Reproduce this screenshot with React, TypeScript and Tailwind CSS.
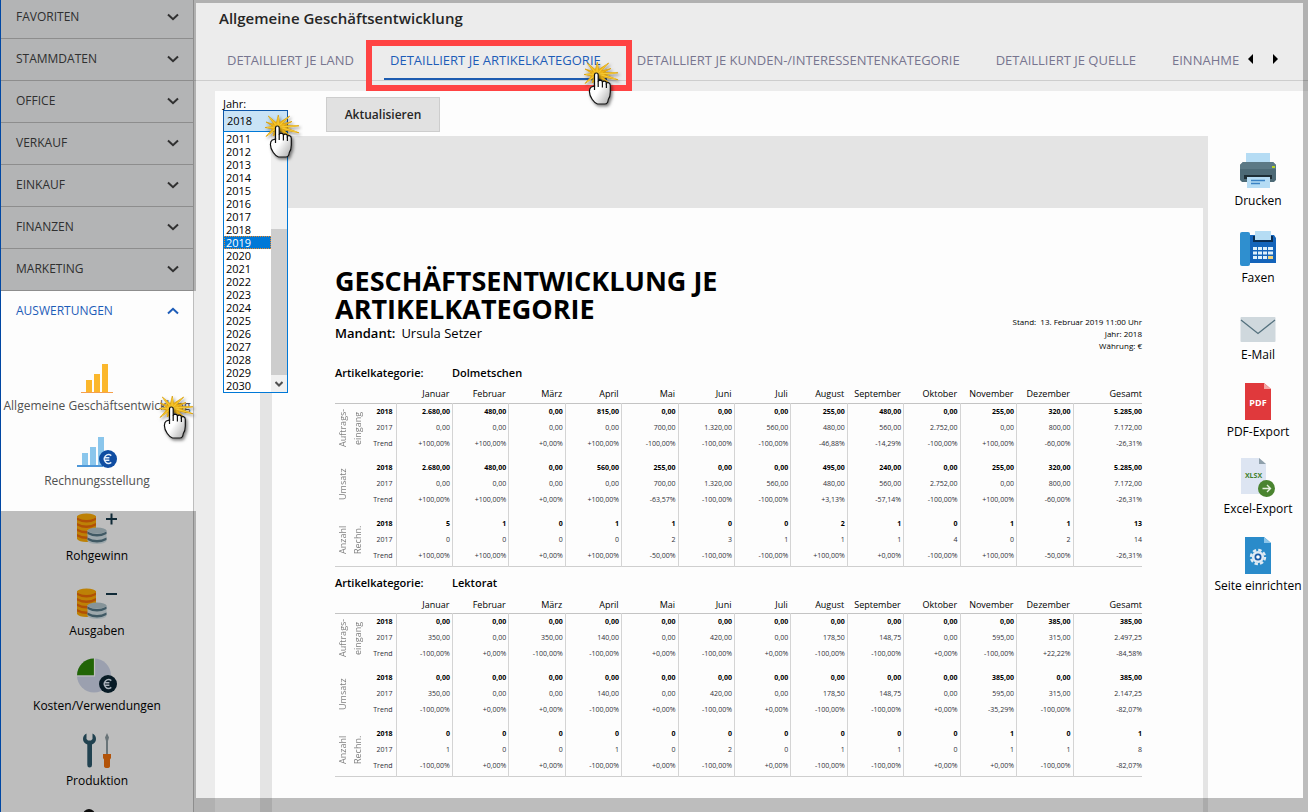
import React, { useState } from 'react';

const MONTHS = ['Januar', 'Februar', 'März', 'April', 'Mai', 'Juni', 'Juli', 'August', 'September', 'Oktober', 'November', 'Dezember', 'Gesamt'];

const ROW_LABELS = ['2018', '2017', 'Trend'];

interface Group {
  label: string[];
  rows: string[];
}

interface Category {
  name: string;
  groups: Group[];
}

const CATEGORIES: Category[] = [
  {
    name: 'Dolmetschen',
    groups: [
      {
        label: ['Auftrags-', 'eingang'],
        rows: [
          '2.680,00 480,00 0,00 815,00 0,00 0,00 0,00 255,00 480,00 0,00 255,00 320,00 5.285,00',
          '0,00 0,00 0,00 0,00 700,00 1.320,00 560,00 480,00 560,00 2.752,00 0,00 800,00 7.172,00',
          '+100,00% +100,00% +0,00% +100,00% -100,00% -100,00% -100,00% -46,88% -14,29% -100,00% +100,00% -60,00% -26,31%',
        ],
      },
      {
        label: ['Umsatz'],
        rows: [
          '2.680,00 480,00 0,00 560,00 255,00 0,00 0,00 495,00 240,00 0,00 255,00 320,00 5.285,00',
          '0,00 0,00 0,00 0,00 700,00 1.320,00 560,00 480,00 560,00 2.752,00 0,00 800,00 7.172,00',
          '+100,00% +100,00% +0,00% +100,00% -63,57% -100,00% -100,00% +3,13% -57,14% -100,00% +100,00% -60,00% -26,31%',
        ],
      },
      {
        label: ['Anzahl', 'Rechn.'],
        rows: [
          '5 1 0 1 1 0 0 2 1 0 1 1 13',
          '0 0 0 0 2 3 1 1 1 4 0 2 14',
          '+100,00% +100,00% +0,00% +100,00% -50,00% -100,00% -100,00% +100,00% +0,00% -100,00% +100,00% -50,00% -26,31%',
        ],
      },
    ],
  },
  {
    name: 'Lektorat',
    groups: [
      {
        label: ['Auftrags-', 'eingang'],
        rows: [
          '0,00 0,00 0,00 0,00 0,00 0,00 0,00 0,00 0,00 0,00 0,00 385,00 385,00',
          '350,00 0,00 350,00 140,00 0,00 420,00 0,00 178,50 148,75 0,00 595,00 315,00 2.497,25',
          '-100,00% +0,00% -100,00% -100,00% +0,00% -100,00% +0,00% -100,00% -100,00% +0,00% -100,00% +22,22% -84,58%',
        ],
      },
      {
        label: ['Umsatz'],
        rows: [
          '0,00 0,00 0,00 0,00 0,00 0,00 0,00 0,00 0,00 0,00 385,00 0,00 385,00',
          '350,00 0,00 0,00 140,00 0,00 420,00 0,00 178,50 148,75 0,00 595,00 315,00 2.147,25',
          '-100,00% +0,00% +0,00% -100,00% +0,00% -100,00% +0,00% -100,00% -100,00% +0,00% -35,29% -100,00% -82,07%',
        ],
      },
      {
        label: ['Anzahl', 'Rechn.'],
        rows: [
          '0 0 0 0 0 0 0 0 0 0 1 0 1',
          '1 0 0 1 0 2 0 1 1 0 1 1 8',
          '-100,00% +0,00% +0,00% -100,00% +0,00% -100,00% +0,00% -100,00% -100,00% +0,00% +0,00% -100,00% -82,07%',
        ],
      },
    ],
  },
];

const YEARS = Array.from({ length: 20 }, (_, i) => String(2011 + i));

const Chevron: React.FC<{ up?: boolean }> = ({ up }) => (
  <svg width="12" height="8" viewBox="0 0 12 8" fill="none" stroke="currentColor" strokeWidth="2">
    <path d={up ? 'M1 6.5 L6 1.8 L11 6.5' : 'M1 1.5 L6 6.2 L11 1.5'} />
  </svg>
);

// Hand pointer with a click burst, fingertip at 14,12
const ClickHand: React.FC<{ className: string }> = ({ className }) => (
  <svg width="40" height="50" viewBox="0 0 40 50" className={`pointer-events-none absolute z-30 ${className}`}>
    <defs>
      <linearGradient id="hand" x1="0" y1="0" x2="1" y2="1">
        <stop offset="0.5" stopColor="#fff" />
        <stop offset="1" stopColor="#a8a8a8" />
      </linearGradient>
      <filter id="shade" x="-30%" y="-30%" width="170%" height="170%">
        <feDropShadow dx="1.5" dy="2" stdDeviation="1.6" floodOpacity="0.5" />
      </filter>
    </defs>
    <path
      d="M15.3 1 L16.6 8.5 L26.7 2 L19.5 9.8 L29 7.5 L21.5 11.4 L36 11.8 L22.5 13.6 L36 18.8 L20.5 15.8 L27 22 L17 17 L10 22 L11.5 16.5 L3 22.5 L9.5 15 L2 13.5 L10 12.4 L3 8 L11 10.3 L5.3 2 L13.4 8.8 Z"
      fill="#efb61a"
      stroke="#d99c06"
      strokeWidth="0.7"
      filter="url(#shade)"
    />
    <path d="M15 13 L15.3 3 M15 13 L25 3.5 M15 13 L34 12 M15 13 L34 18 M15 13 L4 13.4 M15 13 L6.5 3.6 M15 13 L5 21" stroke="#f9d23c" strokeWidth="0.8" />
    <path
      d="M12.5 14 Q12.5 12 14.3 12 Q16.2 12 16.2 14 V20.6 Q16.6 19.2 18.4 19.2 Q20.4 19.4 20.4 21.2 Q21 20 22.6 20.2 Q24.4 20.5 24.4 22.2 Q25 21.3 26.4 21.6 Q28.3 22.2 28.3 24.5 V31 Q28.3 36 26.3 38.5 Q25.8 43 23 43 H15.5 Q12.6 42 10.3 38.5 Q7.4 34.5 7.4 30.5 Q7.4 27.2 9.3 26 L12.5 25 Z"
      fill="url(#hand)"
      stroke="#111"
      strokeWidth="1.2"
      filter="url(#shade)"
    />
    <path d="M12.5 24 V29 M16.2 20 V26 M20.4 21 V26.5 M24.4 22 V27" stroke="#111" strokeWidth="1.2" fill="none" />
  </svg>
);

const EuroBadge: React.FC<{ fill: string }> = ({ fill }) => (
  <g>
    <circle cx="31" cy="26" r="9" fill={fill} />
    <path d="M34.3 22.6 A4.3 4.3 0 1 0 34.3 29.4 M27 24.8 H32.4 M27 27.2 H32.4" fill="none" stroke="#e3eefa" strokeWidth="1.4" />
  </g>
);

const BarsIcon = () => (
  <svg width="40" height="36" viewBox="0 0 40 36">
    <path d="M9 22 h6 v12 h-6z M17 16 h6 v18 h-6z M25 6 h6 v28 h-6z" fill="#fbb72c" />
    <path d="M4 34 H36 V35 H4z" fill="#f5a04c" />
  </svg>
);

const BarsEuroIcon = () => (
  <svg width="40" height="36" viewBox="0 0 40 36">
    <path d="M5 20 h6 v12 h-6z M13 14 h6 v18 h-6z M21 4 h6 v28 h-6z" fill="#8ac6ec" />
    <path d="M0 32 H26 V34 H0z" fill="#4e97d8" />
    <EuroBadge fill="#0f4da2" />
  </svg>
);

const Coins: React.FC<{ sign: string }> = ({ sign }) => (
  <svg width="40" height="36" viewBox="0 0 40 36">
    <path d="M0 8 V31 Q2 34 9.5 34 Q17 34 19 31 V8z" fill="#fdac08" />
    <path
      d="M0 9.5 Q9.5 14.500 19 9.5 V12 Q9.5 17 0 12z M0 15 Q9.5 20 19 15 V17.500 Q9.5 22.500 0 17.500z M0 20.500 Q9.5 25.500 19 20.500 V23 Q9.5 28 0 23z M0 26 Q9.5 31 19 26 V28.500 Q9.5 33.500 0 28.500z"
      fill="#ec6b09"
    />
    <ellipse cx="9.5" cy="8.5" rx="9.5" ry="3" fill="#fdac08" />
    <path d="M10.5 22 V33 Q12 36 20 36 Q28 36 29.5 33 V22z" fill="#d3e1e6" />
    <path d="M10.5 23.5 Q20 28.5 29.5 23.5 V26 Q20 31 10.5 26z M10.5 29.5 Q20 34.5 29.5 29.5 V32 Q20 37 10.5 32z" fill="#567786" />
    <ellipse cx="20" cy="22.5" rx="9.5" ry="3" fill="#b3c6cd" />
    <path d={sign} stroke="#16384a" strokeWidth="2" />
  </svg>
);

const PieIcon = () => (
  <svg width="40" height="36" viewBox="0 0 40 36">
    <circle cx="17" cy="17.5" r="17" fill="#cfd6ea" />
    <path d="M17 17.5 H0 A17 17 0 0 1 17 0.5z" fill="#2c8708" />
    <path d="M17.5 0 V18 H0" fill="none" stroke="#fff" strokeWidth="1.2" />
    <EuroBadge fill="#0b2533" />
  </svg>
);

const ToolsIcon = () => (
  <svg width="40" height="36" viewBox="0 0 40 36">
    <path d="M9.500 0.5 Q6 2 6 6 Q6 9.5 10.300 11.5 V32 Q10.300 34.5 12.600 34.5 Q15 34.5 15 32 V11.5 Q19 9.5 19 6 Q19 2 15.500 0.5 V6 L14 7.5 H11 L9.500 6z" fill="#2c596b" />
    <path d="M30 0 L32 4.5 L31 8 V21 H29 V8 L28 4.5z" fill="#8d9ba1" />
    <path d="M26 21 H34 V25 L33 26.5 V33 Q33 35 30 35 Q27 35 27 33 V26.5 L26 25z" fill="#ee6f0d" />
  </svg>
);

const PersonIcon = () => (
  <svg width="40" height="36" viewBox="0 0 40 36">
    <circle cx="12" cy="7" r="6" fill="#111" />
    <path d="M2 36 Q2 16 12 16 Q22 16 22 36z" fill="#111" />
  </svg>
);

const PrinterIcon = () => (
  <svg width="36" height="40" viewBox="0 0 36 40">
    <path d="M6 3 H30 V13 H6z" fill="#b5dcf4" />
    <path d="M0 15 L3 12 H33 L36 15 V30 L34 32 H2 L0 30z" fill="#4d6a76" />
    <path d="M0 15 L3 12 H33 L36 15 V19 H0z" fill="#5c7985" />
    <path d="M4 25 H32 V29 H4z" fill="#1e2e35" />
    <rect x="32" y="16" width="3" height="2" fill="#b6d422" />
    <path d="M7 27 H30 V38 H7z" fill="#b5dcf4" />
    <path d="M11 30.5 H25 M11 33.5 H20" stroke="#3a82c4" strokeWidth="1.5" />
  </svg>
);

const FaxIcon = () => (
  <svg width="36" height="40" viewBox="0 0 36 40">
    <path d="M10 8 H34 L36 11 V36 H10z" fill="#1464ba" />
    <rect y="5" width="10" height="34" rx="2" fill="#2f8fcf" />
    <path d="M13 9 H33 V15 H13z" fill="#0b2d52" />
    <path d="M15 4 H31 V13 H15z" fill="#b5dcf4" />
    <path
      d="M13 20 h4 v3 h-4z M18 20 h4 v3 h-4z M23 20 h4 v3 h-4z M28 20 h5 v3 h-5z M13 24.5 h4 v3 h-4z M18 24.5 h4 v3 h-4z M23 24.5 h4 v3 h-4z M28 24.5 h5 v3 h-5z M13 29 h4 v3 h-4z M18 29 h4 v3 h-4z M23 29 h4 v3 h-4z"
      fill="#dff0fb"
    />
    <path d="M28 29 h5 v3 h-5z" fill="#f3d37a" />
  </svg>
);

const MailIcon = () => (
  <svg width="36" height="40" viewBox="0 0 36 40">
    <rect x="0.5" y="13" width="35" height="25" rx="1" fill="#cfd8dd" />
    <path d="M1 16 L18 29.5 L35 16" fill="none" stroke="#54717e" strokeWidth="1.3" />
  </svg>
);

const PdfIcon = () => (
  <svg width="36" height="40" viewBox="0 0 36 40">
    <path d="M5 2 H24 L31 8 V39 H5z" fill="#e0393c" />
    <path d="M24 2 V8 H31z" fill="#f4a6a4" />
    <text x="18" y="25" textAnchor="middle" fontSize="9" fontWeight="700" fill="#fff">PDF</text>
  </svg>
);

const XlsxIcon = () => (
  <svg width="36" height="40" viewBox="0 0 36 40">
    <path d="M1 0 H19 L26 6 V36 H1z" fill="#dde5f2" />
    <path d="M19 0 V6 H26z" fill="#8fa0ab" />
    <text x="13.5" y="20" textAnchor="middle" fontSize="7" fontWeight="700" fill="#41802c">XLSX</text>
    <circle cx="26.5" cy="30.5" r="8.5" fill="#4a8430" />
    <path d="M22.5 30.5 H30 M27 27 L30.5 30.5 L27 34" fill="none" stroke="#e6f0df" strokeWidth="1.4" />
  </svg>
);

const PageSetupIcon = () => (
  <svg width="36" height="40" viewBox="0 0 36 40">
    <path d="M5 2 H24 L31 8 V39 H5z" fill="#2a8bca" />
    <path d="M24 2 V8 H31z" fill="#8cc6ea" />
    <circle cx="18" cy="22" r="7" fill="none" stroke="#dfeaf3" strokeWidth="2.4" strokeDasharray="3.4 2.1" />
    <circle cx="18" cy="22" r="4.8" fill="#1a5ba8" stroke="#dfeaf3" strokeWidth="2.6" />
    <circle cx="18" cy="22" r="1.8" fill="#fff" />
  </svg>
);

const MENU = ['FAVORITEN', 'STAMMDATEN', 'OFFICE', 'VERKAUF', 'EINKAUF', 'FINANZEN', 'MARKETING'];

const REPORTS = [
  { label: 'Allgemeine Geschäftsentwicklung', icon: <BarsIcon />, tone: 'text-[#505050]' },
  { label: 'Rechnungsstellung', icon: <BarsEuroIcon />, tone: 'text-[#505050]' },
  { label: 'Rohgewinn', icon: <Coins sign="M29 11 H40 M34.5 5.5 V16.5" />, tone: 'text-black' },
  { label: 'Ausgaben', icon: <Coins sign="M29 11 H40" />, tone: 'text-black' },
  { label: 'Kosten/Verwendungen', icon: <PieIcon />, tone: 'text-black' },
  { label: 'Produktion', icon: <ToolsIcon />, tone: 'text-black' },
];

const ACTIONS = [
  { label: 'Drucken', icon: <PrinterIcon /> },
  { label: 'Faxen', icon: <FaxIcon /> },
  { label: 'E-Mail', icon: <MailIcon /> },
  { label: 'PDF-Export', icon: <PdfIcon /> },
  { label: 'Excel-Export', icon: <XlsxIcon /> },
  { label: 'Seite einrichten', icon: <PageSetupIcon /> },
];

const TABS = ['DETAILLIERT JE LAND', 'DETAILLIERT JE ARTIKELKATEGORIE', 'DETAILLIERT JE KUNDEN-/INTERESSENTENKATEGORIE', 'DETAILLIERT JE QUELLE', 'EINNAHMEN'];

const Sidebar = () => (
  <aside className="relative z-10 w-[194px] shrink-0 border-l border-r border-l-[#0047a3] border-r-[#bdbdbd] bg-[#fdfdfd]">
    <nav className="-mt-[3px]">
      {MENU.map((item) => (
        <button
          key={item}
          type="button"
          className="flex h-[42px] w-full items-center justify-between border-b border-[#bcbcbc] bg-[#eff0f2] pb-[2px] pl-[15px] pr-[14px] text-xs font-medium text-[#404040]"
        >
          {item}
          <Chevron />
        </button>
      ))}
      <button type="button" className="flex h-[42px] w-full items-center justify-between pb-[2px] pl-[15px] pr-[14px] text-xs font-medium text-[#1d5cb8]">
        AUSWERTUNGEN
        <Chevron up />
      </button>
    </nav>
    <ul className="pt-[25px]">
      {REPORTS.map((r, i) => (
        <li key={r.label} className="relative h-[75px]">
          <button type="button" className={`flex w-full flex-col items-center gap-[3px] whitespace-nowrap text-xs leading-[18px] ${r.tone}`}>
            {r.icon}
            {r.label}
          </button>
          {i === 0 && <ClickHand className="left-[156px] top-[37px]" />}
        </li>
      ))}
      <li className="h-[75px]">
        <button type="button" aria-label="Personal" className="flex w-full flex-col items-center">
          <PersonIcon />
        </button>
      </li>
    </ul>
    <div className="pointer-events-none absolute -right-[3px] left-0 top-0 h-[291px] bg-black/25" />
    <div className="pointer-events-none absolute -right-[3px] bottom-0 left-0 top-[511px] bg-black/25" />
  </aside>
);

const Tabs: React.FC<{ active: number; onSelect: (i: number) => void }> = ({ active, onSelect }) => (
  <div className="flex h-10 items-end border-b border-[#cdcdcd] pl-[27px]">
    <div className="flex w-0 flex-1 gap-6">
      {TABS.map((tab, i) => (
        <div key={tab} className={i === TABS.length - 1 ? 'relative w-0 flex-1 overflow-hidden' : 'relative shrink-0'}>
          <button
            type="button"
            onClick={() => onSelect(i)}
            className={`block h-[38px] whitespace-nowrap border-b-2 px-[6px] pt-[2px] text-[13px] font-medium ${i === active ? 'border-[#1d5cb0] text-[#1d5cb8]' : 'border-transparent text-[#77758f]'}`}
          >
            {tab}
          </button>
          {i === 1 && (
            <>
              <div className="pointer-events-none absolute -bottom-[11px] -left-[18px] -right-[25px] -top-[2px] z-20 border-[6px] border-[#ff4343]" />
              <ClickHand className="-right-[15px] top-[19px]" />
            </>
          )}
        </div>
      ))}
    </div>
    <div className="flex h-full w-[69px] items-center gap-5 pb-1 pl-[9px]">
      <button type="button" aria-label="Zurück blättern">
        <svg width="5" height="10" viewBox="0 0 5 10"><path d="M5 0 V10 L0 5z" /></svg>
      </button>
      <button type="button" aria-label="Weiter blättern">
        <svg width="5" height="10" viewBox="0 0 5 10"><path d="M0 0 V10 L5 5z" /></svg>
      </button>
    </div>
  </div>
);

const YearPicker = () => {
  const [year, setYear] = useState('2018');

  return (
    <div className="relative w-[65px] text-[11px] text-black">
      <label htmlFor="jahr" className="block h-[13px] leading-[13px]">Jahr:</label>
      <select
        id="jahr"
        value={year}
        onChange={(e) => setYear(e.target.value)}
        className="block h-[22px] w-full appearance-none border border-[#0c56a8] bg-[#c9e3f6] pl-[3px]"
      >
        {YEARS.map((y) => (
          <option key={y}>{y}</option>
        ))}
      </select>
      <div className="absolute left-0 right-0 top-[34px] z-10 flex border border-[#0078d7] bg-white">
        <ul role="listbox" aria-label="Jahr" className="flex-1">
          {YEARS.map((y) => (
            <li
              key={y}
              role="option"
              aria-selected={y === '2019'}
              onClick={() => setYear(y)}
              className={y === '2019' ? 'h-[13px] bg-[#0078d7] pl-[2px] leading-[13px] text-white outline-1 -outline-offset-1 outline-dotted outline-[#e8872a]' : 'h-[13px] pl-[2px] leading-[13px]'}
            >
              {y}
            </li>
          ))}
        </ul>
        <div className="flex w-4 flex-col justify-end bg-[#f0f0f0]">
          <div className="h-[146px] bg-[#cdcdcd]" />
          <div className="flex h-[17px] items-center justify-center text-[#505050]">
            <svg width="8" height="6" viewBox="0 0 8 6" fill="none" stroke="currentColor" strokeWidth="2"><path d="M0.5 1 L4 4.5 L7.5 1" /></svg>
          </div>
        </div>
      </div>
      <ClickHand className="left-10 top-[17px]" />
    </div>
  );
};

const CategoryTable: React.FC<{ category: Category }> = ({ category }) => (
  <section>
    <h2 className="flex h-[18px] items-center text-[11px] font-semibold">
      <span className="w-[117px]">Artikelkategorie:</span>
      <span>{category.name}</span>
    </h2>
    <table className="w-full table-fixed border-b border-[#cfcfcf] text-right text-[7px] leading-4">
      <colgroup>
        <col className="w-[30px]" />
        <col className="w-[31px]" />
        {MONTHS.map((m) => (
          <col key={m} className={m === 'Gesamt' ? 'w-[69px]' : ''} />
        ))}
      </colgroup>
      <thead>
        <tr className="border-b border-[#c4c4c4] text-[9px]">
          <th colSpan={2} aria-label="Kennzahl" />
          {MONTHS.map((m) => (
            <th key={m} className={`h-[21px] pt-1 font-medium ${m === 'Gesamt' ? '' : 'pr-[3px]'}`}>{m}</th>
          ))}
        </tr>
      </thead>
      <tbody>
        {category.groups.map((group, g) =>
          group.rows.map((row, r) => {
            const pad = r < 2 ? '' : g < 2 ? 'pb-2' : 'pb-[2px]';
            const tone = r === 0 ? 'font-bold text-black' : 'font-normal text-[#303038]';
            return (
              <tr key={`${g}-${r}`}>
                {r === 0 && (
                  <th rowSpan={3} scope="rowgroup" className="align-top font-normal text-[#808080]">
                    <div className="flex h-12 text-[9px]">
                      {group.label.map((part) => (
                        <span key={part} className="flex w-[15px] rotate-180 items-center justify-center [writing-mode:vertical-rl]">{part}</span>
                      ))}
                    </div>
                  </th>
                )}
                <th scope="row" className={`border-r border-[#d4d4d4] pr-[3px] ${tone} ${pad}`}>{ROW_LABELS[r]}</th>
                {row.split(' ').map((value, i) => (
                  <td key={i} className={`${tone} ${pad} ${i < 12 ? 'border-r border-[#d4d4d4] pr-[2px]' : ''}`}>{value}</td>
                ))}
              </tr>
            );
          })
        )}
      </tbody>
    </table>
  </section>
);

const Report = () => (
  <div className="flex flex-1 flex-col bg-[#e4e4e4] pl-3 pr-[5px] pt-[72px]">
    <article className="flex-1 bg-[#fdfdfd] pl-[63px] pr-[61px] pt-[59px] text-black">
      <header className="flex h-[85px] items-end justify-between">
        <div className="h-full">
          <h1 className="text-[27px] font-bold leading-7">
            GESCHÄFTSENTWICKLUNG JE
            <br />
            ARTIKELKATEGORIE
          </h1>
          <p className="flex gap-[6px] text-[13px] leading-5">
            <span className="font-semibold">Mandant:</span>
            <span>Ursula Setzer</span>
          </p>
        </div>
        <div className="text-right text-[8px] font-medium leading-3">
          <p>Stand:&nbsp; 13. Februar 2019 11:00 Uhr</p>
          <p>Jahr: 2018</p>
          <p>Währung: €</p>
        </div>
      </header>
      <div className="flex flex-col gap-2 pt-3">
        {CATEGORIES.map((c) => (
          <CategoryTable key={c.name} category={c} />
        ))}
      </div>
    </article>
  </div>
);

export default function App() {
  const [activeTab, setActiveTab] = useState(1);

  return (
    <div className="flex h-screen w-full overflow-hidden bg-[#ececec] font-['Open_Sans','Noto_Sans',sans-serif]">
      <Sidebar />
      <main className="relative flex min-w-0 flex-1 flex-col">
        <h1 className="flex h-[41px] shrink-0 items-center pb-1 pl-[25px] text-[15px] font-semibold text-[#262626]">Allgemeine Geschäftsentwicklung</h1>
        <Tabs active={activeTab} onSelect={setActiveTab} />
        <div className="ml-[21px] mt-[10px] flex flex-1 flex-col bg-[#fdfdfd]">
          <div className="flex h-[45px] shrink-0 gap-[38px] pl-2 pt-[6px]">
            <YearPicker />
            <button type="button" className="h-[35px] w-[114px] border border-[#cdcdcd] bg-[#e1e1e1] text-xs font-semibold text-[#262626]">
              Aktualisieren
            </button>
          </div>
          <div className="flex flex-1 pl-[45px]">
            <Report />
            <div className="flex w-[100px] flex-col gap-[17px] pt-[14px]">
              {ACTIONS.map((a) => (
                <button key={a.label} type="button" className="flex flex-col items-center gap-[2px] whitespace-nowrap text-xs leading-[18px] text-black">
                  {a.icon}
                  {a.label}
                </button>
              ))}
            </div>
          </div>
        </div>
        <div className="pointer-events-none absolute inset-0 left-[2px] border-b-[14px] border-r-[5px] border-t-[3px] border-black/25" />
      </main>
    </div>
  );
}
